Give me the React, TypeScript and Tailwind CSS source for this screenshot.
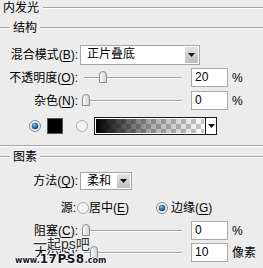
import React from 'react'

const font = "font-['Liberation_Sans','Noto_Sans_CJK_SC',sans-serif]"

// etched separator line
const Groove = ({ className = '' }: { className?: string }) => (
  <div className={`h-[2px] border-t border-t-[#a3a3a3] border-b border-b-white ${className}`} />
)

const GroupHead = ({ title }: { title: string }) => (
  <div className="flex items-center h-[16px]">
    <Groove className="w-[10px]" />
    <span className="px-[3px] leading-[16px]">{title}</span>
    <Groove className="flex-1" />
  </div>
)

const Label = ({ text, k, w = 78 }: { text: string; k: string; w?: number }) => (
  <span className="shrink-0 text-right whitespace-nowrap" style={{ width: w }}>
    {text}(<span className="underline underline-offset-2">{k}</span>):
  </span>
)

const Arrow = () => (
  <svg width="7" height="4" viewBox="0 0 7 4">
    <polygon points="0,0 7,0 3.5,4" fill="#111" />
  </svg>
)

const Dropdown = ({ value, w, h }: { value: string; w: number; h: number }) => (
  <div className="ml-[2px] flex bg-white border border-[#a5a5a5]" style={{ width: w, height: h }}>
    <span className="flex-1 pl-[6px] leading-[17px] whitespace-nowrap">{value}</span>
    <div className="w-[13px] m-[1px] bg-linear-to-b from-[#e4e4e4] to-[#bdbdbd] flex items-center justify-center">
      <Arrow />
    </div>
  </div>
)

const Thumb = () => (
  <svg width="8" height="12" viewBox="0 0 8 12">
    <defs>
      <linearGradient id="tg" x1="0" y1="0" x2="1" y2="0">
        <stop offset="0" stopColor="#ffffff" />
        <stop offset="1" stopColor="#cfcfcf" />
      </linearGradient>
    </defs>
    <path d="M0.5 11.5 V4 A3.5 3.5 0 0 1 7.5 4 V11.5 Z" fill="url(#tg)" stroke="#8c8c8c" />
  </svg>
)

const Slider = ({ at }: { at: number }) => (
  <div className="relative ml-[6px] w-[98px] h-[19px] flex items-center">
    <Groove className="w-full" />
    <div className="absolute top-[3px]" style={{ left: at }}>
      <Thumb />
    </div>
  </div>
)

const Field = ({ value, unit }: { value: string; unit: string }) => (
  <>
    <div className="ml-[9px] w-[37px] h-[19px] bg-white border border-[#a9a9a9] pl-[3px] leading-[17px]">{value}</div>
    <span className="ml-[4px]">{unit}</span>
  </>
)

const Radio = ({ on }: { on?: boolean }) => (
  <svg width="12" height="12" viewBox="0 0 12 12" className="shrink-0">
    <defs>
      <radialGradient id="rb" cx="0.4" cy="0.35" r="0.7">
        <stop offset="0" stopColor="#8fc6ec" />
        <stop offset="0.5" stopColor="#2f76ad" />
        <stop offset="1" stopColor="#123c63" />
      </radialGradient>
    </defs>
    <circle cx="6" cy="6" r="5.5" fill="#f3f3f3" stroke={on ? '#7f8a94' : '#a8a8a8'} />
    {on && <circle cx="6" cy="6" r="3.3" fill="url(#rb)" />}
  </svg>
)

export default function App() {
  return (
    <div className={`relative w-[263px] h-[268px] overflow-hidden bg-[#ececec] text-[12px] text-black ${font}`}>
      {/* title */}
      <div className="flex items-center h-[16px] pl-[3px]">
        <span className="pr-[4px] leading-[16px]">内发光</span>
        <Groove className="flex-1" />
      </div>

      <div className="mt-[4px]">
        <GroupHead title="结构" />
      </div>

      <div className="mt-[9px] flex items-center">
        <Label text="混合模式" k="B" />
        <Dropdown value="正片叠底" w={120} h={20} />
      </div>

      <div className="mt-[3px] flex items-center">
        <Label text="不透明度" k="O" />
        <Slider at={15} />
        <Field value="20" unit="%" />
      </div>

      <div className="mt-[4px] flex items-center">
        <Label text="杂色" k="N" />
        <Slider at={-2} />
        <Field value="0" unit="%" />
      </div>

      <div className="mt-[7px] flex items-center pl-[29px] h-[18px]">
        <Radio on />
        <div className="ml-[6px] w-[16px] h-[16px] bg-black border border-[#555]" />
        <div className="ml-[13px]">
          <Radio />
        </div>
        <div className="ml-[6px] w-[123px] h-[18px] flex border border-[#1a1a1a] bg-white">
          <div className="flex-1 border border-white bg-[repeating-conic-gradient(#c8c8c8_0_25%,#ffffff_0_50%)] bg-[length:10px_10px]">
            <div className="w-full h-full bg-linear-to-r from-black via-[#00000055] to-transparent" />
          </div>
          <div className="w-[11px] border-l border-[#1a1a1a] flex items-center justify-center">
            <Arrow />
          </div>
        </div>
      </div>

      <Groove className="mt-[10px] w-full" />

      <div className="mt-[2px]">
        <GroupHead title="图素" />
      </div>

      <div className="mt-[7px] flex items-center">
        <Label text="方法" k="Q" />
        <Dropdown value="柔和" w={52} h={18} />
      </div>

      <div className="mt-[10px] flex items-center h-[16px]">
        <span className="w-[76px] text-right shrink-0">源:</span>
        <div className="ml-[1px]">
          <Radio />
        </div>
        <span className="w-[67px] whitespace-nowrap">
          居中(<span className="underline underline-offset-2">E</span>)
        </span>
        <Radio on />
        <span className="ml-[3px] whitespace-nowrap">
          边缘(<span className="underline underline-offset-2">G</span>)
        </span>
      </div>

      <div className="mt-[5px] flex items-center">
        <Label text="阻塞" k="C" />
        <Slider at={-2} />
        <Field value="0" unit="%" />
      </div>

      <div className="mt-[3px] flex items-center">
        <Label text="大小" k="S" />
        <Slider at={6} />
        <Field value="10" unit="像素" />
      </div>

      {/* watermark over the last rows */}
      <span className="absolute left-[33px] top-[237px] text-[14px] leading-[15px] text-[#2e2e2e] font-['Liberation_Sans','Noto_Sans_CJK_SC',sans-serif] [text-shadow:1px_0_#f4f4f4,-1px_0_#f4f4f4,0_1px_#f4f4f4,0_-1px_#f4f4f4]">
        一起ps吧
      </span>
      <div className="absolute left-[15px] top-[253px] flex items-end font-['DejaVu_Sans',sans-serif] font-black text-[#14142a] leading-none [text-shadow:1px_0_#fff,-1px_0_#fff,0_1px_#fff,0_-1px_#fff]">
        <span className="text-[8px]">www.</span>
        <span className="text-[12px] tracking-[0.5px]">17PS8</span>
        <span className="text-[8px]">.com</span>
      </div>
    </div>
  )
}
